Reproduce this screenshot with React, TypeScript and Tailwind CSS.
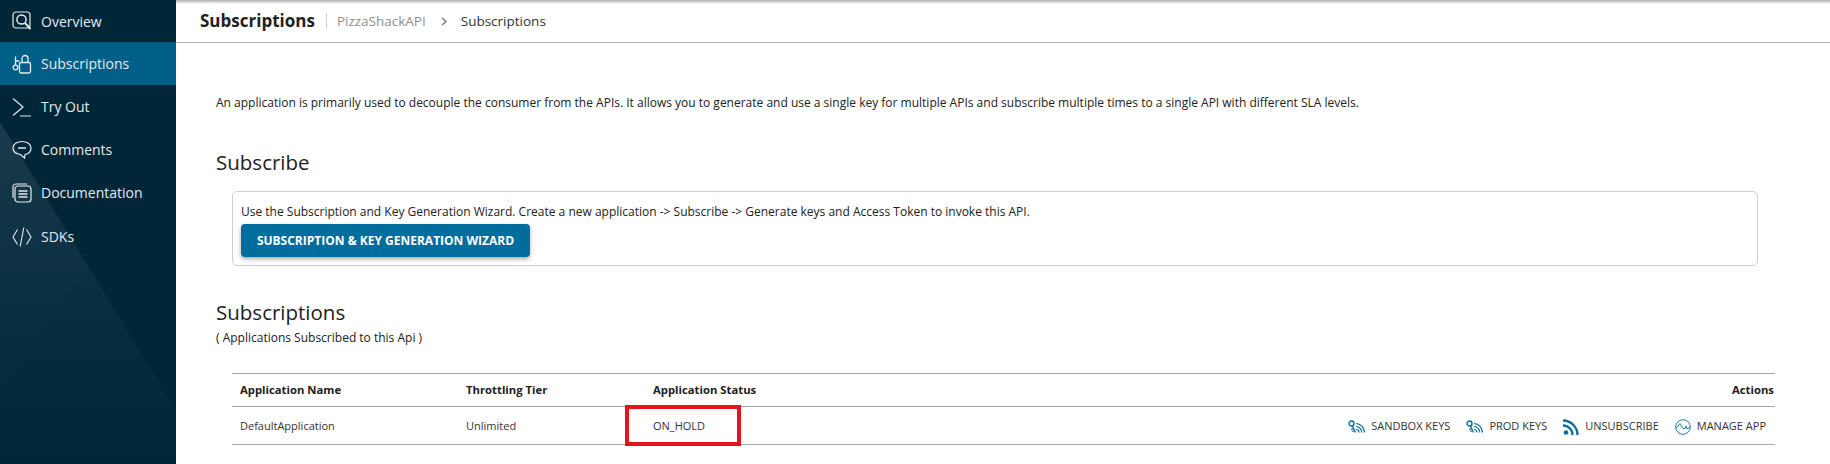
import React from 'react';

const iconClass = 'w-[20px] h-[20px] shrink-0';

const OverviewIcon = () => (
  <svg viewBox="0 0 20 20" className={iconClass} fill="none" stroke="currentColor" strokeWidth="1.2">
    <rect x="1" y="1" width="17" height="16" rx="3" />
    <circle cx="9.500" cy="8.500" r="4.600" strokeWidth="1.500" />
    <path d="M13 12l5.500 6" strokeWidth="2" />
  </svg>
);

const SubscriptionsIcon = () => (
  <svg viewBox="0 0 20 20" className={iconClass} fill="none" stroke="currentColor" strokeWidth="1.300">
    <rect x="7.500" y="8.500" width="11" height="10.500" rx="1.500" />
    <path d="M10 8.500V4.500a3 3 0 0 1 6 0v4" />
    <circle cx="3.500" cy="13.500" r="2.300" />
    <path d="M3.500 11V2.500M3.500 7H7.500" />
  </svg>
);

const TryOutIcon = () => (
  <svg viewBox="0 0 20 20" className={iconClass} fill="none" stroke="currentColor" strokeWidth="1.200">
    <path d="M1 1.500l10 8.500L1 18.500M8 19h11" />
  </svg>
);

const CommentsIcon = () => (
  <svg viewBox="0 0 20 20" className={iconClass} fill="none" stroke="currentColor" strokeWidth="1.200">
    <path d="M10 1.500c5 0 9 2.500 9 6.500s-3.500 6-6 6.500l-.500 3.500-4-3.500C5 14 1 12 1 8s4-6.500 9-6.500z" />
    <path d="M6 8h8" strokeWidth="1.500" />
  </svg>
);

const DocumentationIcon = () => (
  <svg viewBox="0 0 20 20" className={iconClass} fill="none" stroke="currentColor" strokeWidth="1.200">
    <rect x="3" y="3" width="16" height="16" rx="3" />
    <path d="M1 15V4a3 3 0 0 1 3-3h11" />
    <path d="M6.500 8h9M6.500 11h9M6.500 14h9" strokeWidth="1.300" />
  </svg>
);

const SdkIcon = () => (
  <svg viewBox="0 0 20 20" className={iconClass} fill="none" stroke="currentColor" strokeWidth="1.100">
    <path d="M5.500 2.500L1 10l4.500 7.500M14.500 2.500L19 10l-4.500 7.500M11.800 .5L8.200 19.500" />
  </svg>
);

const KeysIcon = () => (
  <svg viewBox="0 0 17 14" className="w-[17px] h-[14px] shrink-0 text-[#0a6d97]" fill="none" stroke="currentColor">
    <circle cx="3.500" cy="3.500" r="2.500" strokeWidth="1.400" />
    <path d="M4.500 6l3 6.500M5.500 8.500L3 9.500M6.500 10.500L4 11.500" strokeWidth="1.300" />
    <path d="M8 3.500a9 9 0 0 1 8.500 9M8 6.500a6 6 0 0 1 5.800 6M8 9.500a3 3 0 0 1 3 3" strokeWidth="1.200" />
  </svg>
);

const RssIcon = () => (
  <svg viewBox="0 0 16 16" className="w-[16px] h-[16px] shrink-0 text-[#0a6d97]" fill="none" stroke="currentColor">
    <circle cx="3" cy="13.500" r="2.300" fill="currentColor" stroke="none" />
    <path d="M0 6.500a9.500 9.500 0 0 1 9.500 9.500M0 1.500a14.500 14.500 0 0 1 14.500 14.500" strokeWidth="2.300" />
  </svg>
);

const ManageIcon = () => (
  <svg viewBox="0 0 16 16" className="w-[16px] h-[16px] shrink-0 text-[#0a6d97]" fill="none" stroke="currentColor" strokeWidth="0.900">
    <circle cx="8" cy="8" r="7.300" />
    <path d="M1.500 9L5 4.500 8 9.500h2l1-2.500 1 3 3-2" />
  </svg>
);

const navItems = [
  { label: 'Overview', icon: <OverviewIcon />, height: 'h-[42px]' },
  { label: 'Subscriptions', icon: <SubscriptionsIcon />, height: 'h-[43px]', active: true },
  { label: 'Try Out', icon: <TryOutIcon />, height: 'h-[43px]' },
  { label: 'Comments', icon: <CommentsIcon />, height: 'h-[43px]' },
  { label: 'Documentation', icon: <DocumentationIcon />, height: 'h-[43px]' },
  { label: 'SDKs', icon: <SdkIcon />, height: 'h-[45px]' },
];

const actions = [
  { label: 'SANDBOX KEYS', icon: <KeysIcon /> },
  { label: 'PROD KEYS', icon: <KeysIcon /> },
  { label: 'UNSUBSCRIBE', icon: <RssIcon /> },
  { label: 'MANAGE APP', icon: <ManageIcon /> },
];

export default function App() {
  return (
    <div className="flex w-[1830px] h-[464px] overflow-hidden bg-white font-['Open_Sans',sans-serif] text-[#212121]">
      {/* sidebar */}
      <aside className="relative w-[176px] h-full shrink-0 bg-[#012638] text-[#e4ecf0]">
        <svg viewBox="0 0 176 464" className="absolute inset-0 w-full h-full">
          <defs>
            <linearGradient id="fade" x1="0" y1="0" x2="0" y2="1">
              <stop offset="0" stopColor="#1a3b4b" />
              <stop offset="0.6" stopColor="#072d3f" />
              <stop offset="1" stopColor="#012739" />
            </linearGradient>
          </defs>
          <polygon points="0,122 176,410 176,464 0,464" fill="url(#fade)" />
          <polygon points="0,395 85,268 176,400 176,464 0,464" fill="#012638" opacity="0.12" />
        </svg>
        <nav className="relative flex flex-col">
          {navItems.map((item) => (
            <div
              key={item.label}
              className={`flex items-center pl-[12px] gap-[9px] text-[14px] ${item.height} ${item.active ? 'bg-[#005f86]' : ''}`}
            >
              {item.icon}
              <span>{item.label}</span>
            </div>
          ))}
        </nav>
      </aside>

      {/* main */}
      <main className="relative flex-1 min-w-0">
        <div className="absolute top-0 inset-x-0 h-[4px] bg-gradient-to-b from-[#b0b0b0] to-white" />
        <header className="flex items-center h-[43px] pl-[24px] border-b border-[#b5b5b5]">
          <h1 className="text-[17px] font-bold pr-[11px]">Subscriptions</h1>
          <span className="w-px h-[16px] bg-[#cfcfcf]" />
          <span className="text-[13.500px] text-[#8f8f8f] pl-[10px]">PizzaShackAPI</span>
          <svg viewBox="0 0 6 9" className="w-[6px] h-[9px] ml-[15px] mr-[14px] text-[#757575]" fill="none" stroke="currentColor" strokeWidth="1.300">
            <path d="M1 1l4 3.500L1 8" />
          </svg>
          <span className="text-[13.500px] text-[#333]">Subscriptions</span>
        </header>

        <div className="pl-[40px] pr-[55px]">
          <p className="mt-[51px] text-[12px] leading-[18px]">
            An application is primarily used to decouple the consumer from the APIs. It allows you to generate and use a single key for multiple APIs and subscribe multiple times to a single API with different SLA levels.
          </p>

          <h2 className="mt-[36px] text-[20.500px] leading-[28px]">Subscribe</h2>
          <div className="mt-[15px] ml-[16px] mr-[17px] h-[75px] border border-[#cfcfcf] rounded-[5px] px-[8px] pt-[11px]">
            <p className="text-[12px] leading-[18px]">
              Use the Subscription and Key Generation Wizard. Create a new application -&gt; Subscribe -&gt; Generate keys and Access Token to invoke this API.
            </p>
            <button className="mt-[3px] h-[33px] w-[289px] rounded-[4px] bg-[#006e9c] text-white text-[12px] font-bold shadow-[0_2px_4px_rgba(0,0,0,0.35)]">
              SUBSCRIPTION &amp; KEY GENERATION WIZARD
            </button>
          </div>

          <h2 className="mt-[32px] text-[20.500px] leading-[28px]">Subscriptions</h2>
          <p className="mt-[3px] text-[12px] leading-[18px]">( Applications Subscribed to this Api )</p>

          <div className="relative mt-[26px] ml-[16px] text-[11px]">
            <div className="grid grid-cols-[226px_187px_1fr] items-center h-[34px] border-y border-[#a8a8a8] font-bold text-[11.300px] px-[8px]">
              <span>Application Name</span>
              <span>Throttling Tier</span>
              <div className="flex justify-between">
                <span>Application Status</span>
                <span className="-mr-[7px]">Actions</span>
              </div>
            </div>
            <div className="grid grid-cols-[226px_187px_1fr] items-center h-[38px] border-b border-[#a8a8a8] px-[8px] pt-[2px] text-[#333]">
              <span>DefaultApplication</span>
              <span>Unlimited</span>
              <div className="flex justify-between items-center">
                <span>ON_HOLD</span>
                <div className="flex items-center gap-[16px] pr-[1px]">
                  {actions.map((a) => (
                    <span key={a.label} className="flex items-center gap-[6px]">
                      {a.icon}
                      {a.label}
                    </span>
                  ))}
                </div>
              </div>
            </div>
            {/* annotation drawn over the status cell */}
            <div className="absolute left-[393px] top-[32px] w-[116px] h-[41px] border-[4px] border-[#e3151c]" />
          </div>
        </div>
      </main>
    </div>
  );
}
